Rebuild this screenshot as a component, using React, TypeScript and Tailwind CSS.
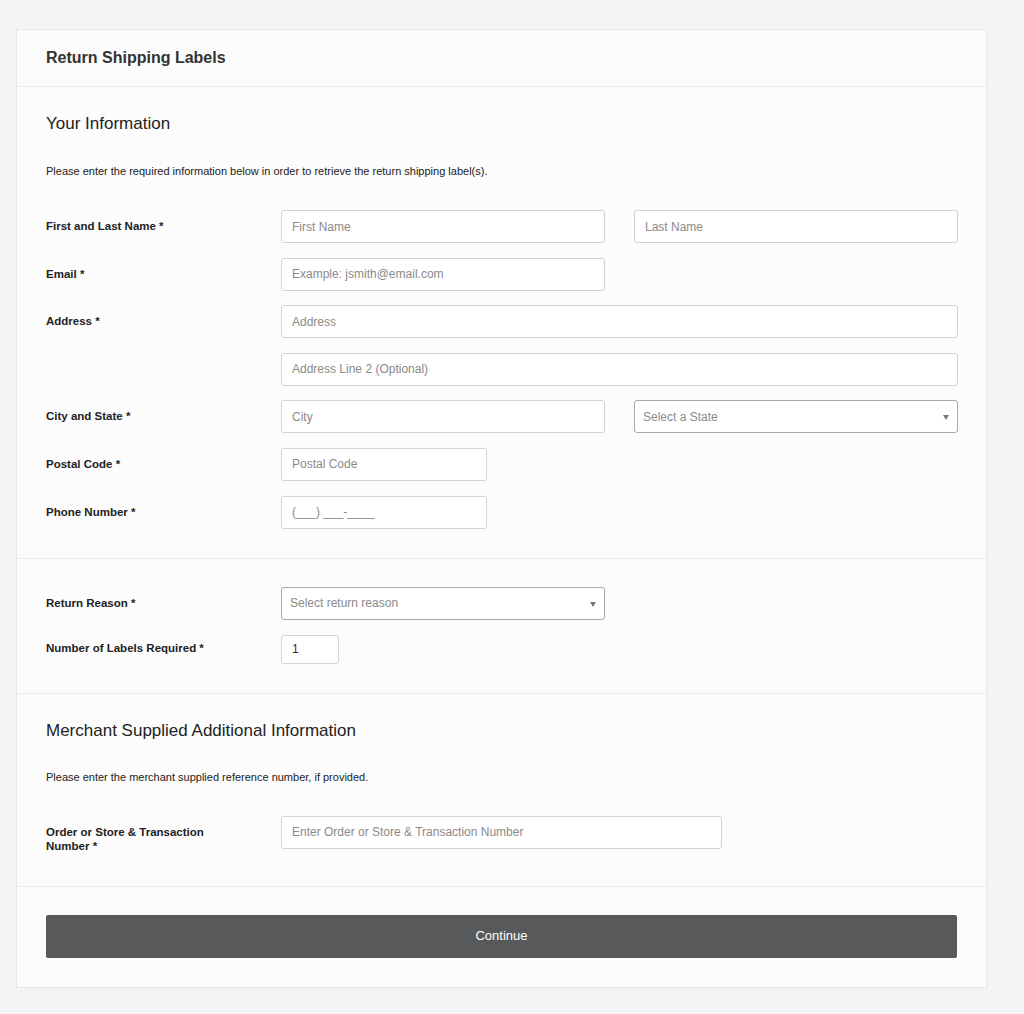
const font = { fontFamily: '"Liberation Sans", Arial, sans-serif' };

function Field({ placeholder, className = "" }: { placeholder: string; className?: string }) {
  return (
    <input
      placeholder={placeholder}
      className={`h-[33px] rounded-[3px] border border-[#d2d2d2] bg-white px-[10px] text-[12px] text-[#333] placeholder:text-[#8a8a8a] outline-none ${className}`}
    />
  );
}

function Select({ placeholder, className = "" }: { placeholder: string; className?: string }) {
  return (
    <div className={`relative flex h-[33px] items-center rounded-[3px] border border-[#a8a8a8] bg-white px-[8px] text-[12px] text-[#8a8a8a] ${className}`}>
      {placeholder}
      <span className="absolute right-[8px] top-[14px] h-0 w-0 border-x-[3.5px] border-t-[5px] border-x-transparent border-t-[#777]" />
    </div>
  );
}

function Row({ label, children }: { label: React.ReactNode; children: React.ReactNode }) {
  return (
    <div className="flex items-start">
      <div className="w-[235px] shrink-0 pt-[9px] pr-[60px] text-[11.5px] font-bold leading-[14px] text-[#222]">{label}</div>
      <div className="flex flex-1 gap-[29px]">{children}</div>
    </div>
  );
}

export default function App() {
  return (
    <div className="min-h-[1014px] bg-[#f4f4f4] px-[16px] pt-[29px] pb-[19px]" style={font}>
      <div className="w-[971px] border border-[#e6e6e6] bg-[#fcfcfc]">
        <div className="flex h-[57px] items-center border-b border-[#ececec] px-[29px]">
          <h1 className="text-[16px] font-bold text-[#333]">Return Shipping Labels</h1>
        </div>

        <div className="border-b border-[#ececec] px-[29px] pt-[27px] pb-[29px]">
          <h2 className="text-[17px] leading-[20px] text-[#222]">Your Information</h2>
          <p className="mt-[29px] text-[11px] leading-[16px] text-[#222]">
            Please enter the required information below in order to retrieve the return shipping label(s).
          </p>
          <div className="mt-[31px] flex flex-col gap-[14.6px]">
            <Row label="First and Last Name *">
              <Field placeholder="First Name" className="w-[324px]" />
              <Field placeholder="Last Name" className="w-[324px]" />
            </Row>
            <Row label="Email *">
              <Field placeholder="Example: jsmith@email.com" className="w-[324px]" />
            </Row>
            <Row label="Address *">
              <Field placeholder="Address" className="w-[677px]" />
            </Row>
            <Row label="">
              <Field placeholder="Address Line 2 (Optional)" className="w-[677px]" />
            </Row>
            <Row label="City and State *">
              <Field placeholder="City" className="w-[324px]" />
              <Select placeholder="Select a State" className="w-[324px]" />
            </Row>
            <Row label="Postal Code *">
              <Field placeholder="Postal Code" className="w-[206px]" />
            </Row>
            <Row label="Phone Number *">
              <Field placeholder="(___) ___-____" className="w-[206px]" />
            </Row>
          </div>
        </div>

        <div className="flex flex-col gap-[15px] border-b border-[#ececec] px-[29px] pt-[28px] pb-[29px]">
          <Row label="Return Reason *">
            <Select placeholder="Select return reason" className="w-[324px]" />
          </Row>
          <div className="flex items-center">
            <div className="w-[235px] shrink-0 text-[11.5px] font-bold text-[#222]">Number of Labels Required *</div>
            <input defaultValue="1" className="h-[29px] w-[58px] rounded-[3px] border border-[#d2d2d2] bg-white px-[10px] text-[12px] text-[#333] outline-none" />
          </div>
        </div>

        <div className="border-b border-[#ececec] px-[29px] pt-[27px] pb-[33px]">
          <h2 className="text-[17px] leading-[20px] text-[#222]">Merchant Supplied Additional Information</h2>
          <p className="mt-[28px] text-[11px] leading-[16px] text-[#222]">
            Please enter the merchant supplied reference number, if provided.
          </p>
          <div className="mt-[31px]">
            <Row label="Order or Store & Transaction Number *">
              <Field placeholder="Enter Order or Store & Transaction Number" className="w-[441px]" />
            </Row>
          </div>
        </div>

        <div className="px-[29px] pt-[28px] pb-[29px]">
          <button className="h-[43px] w-full rounded-[2px] bg-[#58595b] text-[13px] text-white">Continue</button>
        </div>
      </div>
    </div>
  );
}
